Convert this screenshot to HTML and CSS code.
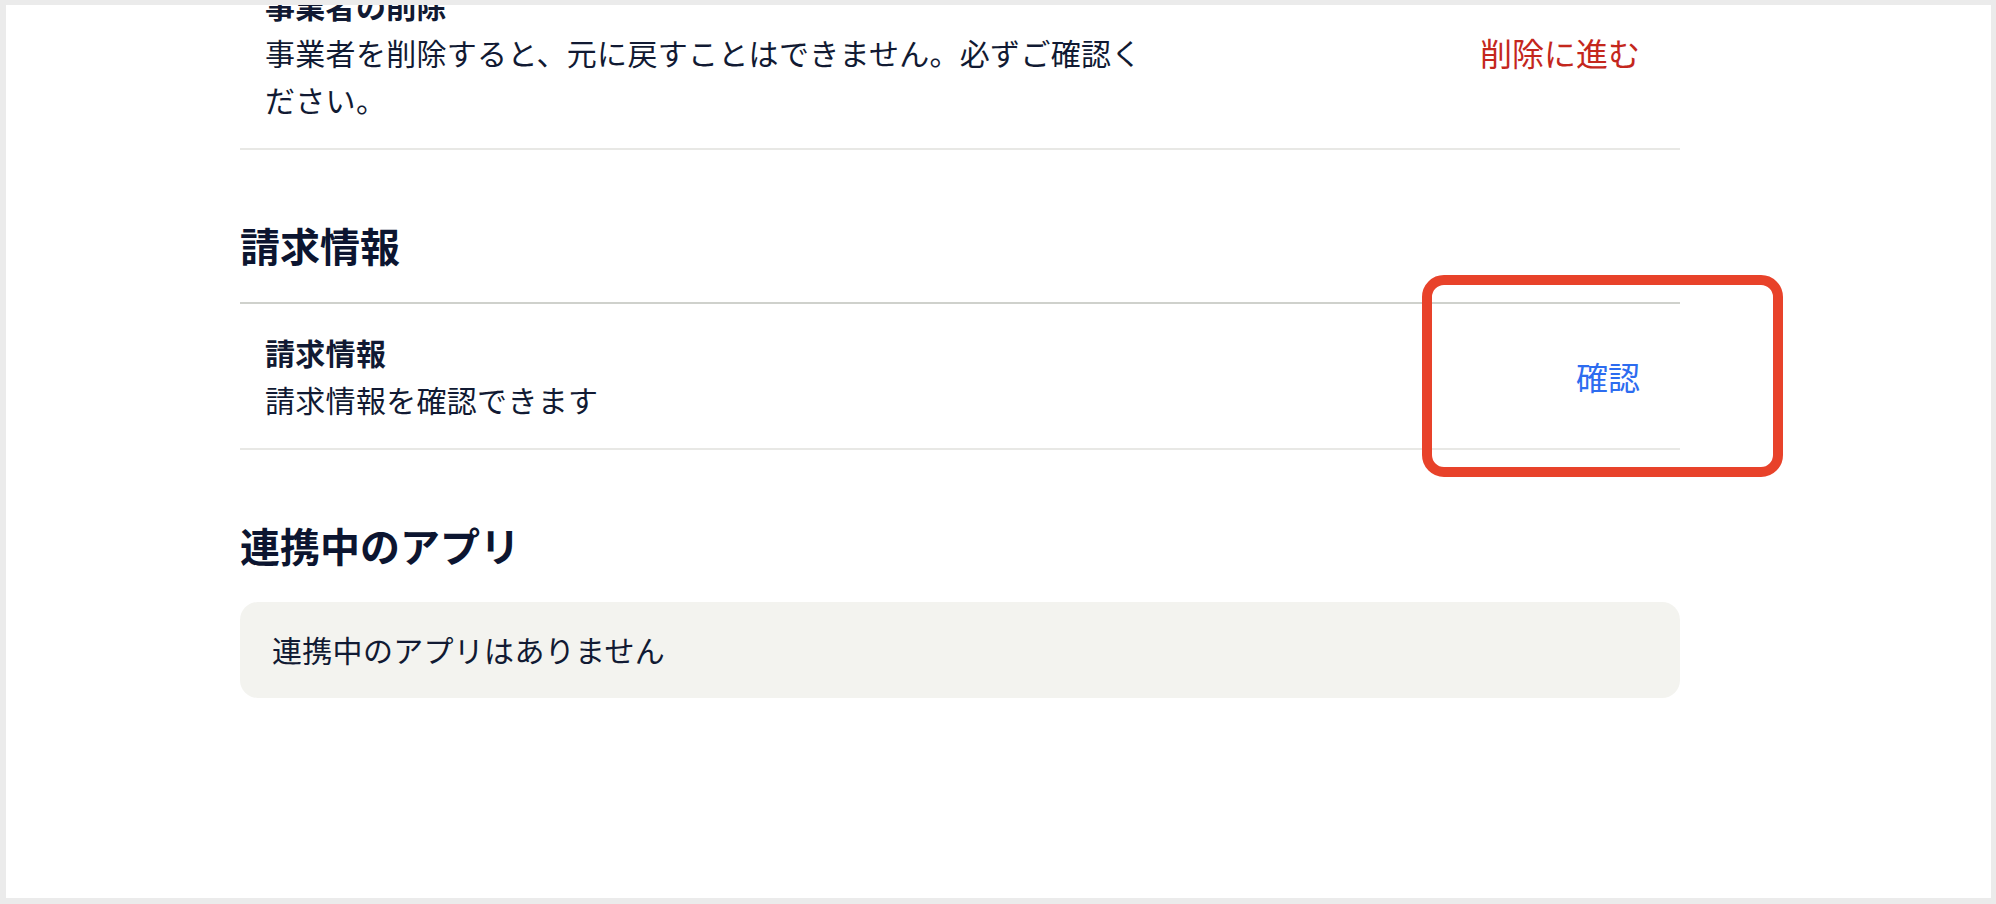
FILE: index.html
```html
<!DOCTYPE html>
<html lang="ja">
<head>
<meta charset="utf-8">
<title>事業者設定</title>
<link rel="stylesheet" href="styles.css">
</head>
<body>
<div class="screen">
<div class="page">

<div class="section first">
	<div class="list">
		<div class="row">
			<div class="row-text">
				<div class="row-title">事業者の削除</div>
				<div class="row-desc">事業者を削除すると、元に戻すことはできません。必ずご確認ください。</div>
			</div>
			<a class="row-action danger" href="#">削除に進む</a>
		</div>
	</div>
</div>

<div class="section">
	<h2>請求情報</h2>
	<div class="list">
		<div class="row">
			<div class="row-text">
				<div class="row-title">請求情報</div>
				<div class="row-desc">請求情報を確認できます</div>
			</div>
			<a class="row-action" href="#">確認</a>
			<div class="highlight"></div>
		</div>
	</div>
</div>

<div class="section">
	<h2>連携中のアプリ</h2>
	<div class="empty">連携中のアプリはありません</div>
</div>

</div>
</div>
</body>
</html>
```

FILE: styles.css
```css
html,body{margin:0;padding:0}
body{background:#fff;font-family:"Noto Sans CJK JP","Noto Sans",sans-serif;color:#111a33}
a{text-decoration:none}

.screen{box-sizing:border-box;height:904px;border:solid #ebebeb;border-width:5px 5px 6px 6px;overflow:hidden;background:#fff}
.page{width:1440px;margin:-48px 0 0 234px}

.section h2{margin:65px 0 27px;font-size:40px;line-height:60px;font-weight:700;color:#0c1530}
.section.first h2{display:none}

.list{border-top:2px solid #cfd1cc}
.section.first .list{border-top:0}

.row{position:relative;display:flex;align-items:center;justify-content:space-between;padding:25px 40px 25px 25px;border-bottom:2px solid #e8e8e5;font-size:30px;line-height:47px;letter-spacing:0.3px}
.row-text{max-width:890px}
.row-title{font-weight:700}
.row-action{font-size:32px;letter-spacing:0;color:#2d6cf0;white-space:nowrap}
.row-action.danger{color:#c4271d}

/* annotation drawn over the row */
.highlight{position:absolute;top:-29px;right:-103px;width:361px;height:202px;box-sizing:border-box;border:10px solid #e8422a;border-radius:22px}

.empty{background:#f3f3ef;border-radius:18px;padding:24px 32px 25px;font-size:30px;line-height:47px;letter-spacing:0.3px}
```
